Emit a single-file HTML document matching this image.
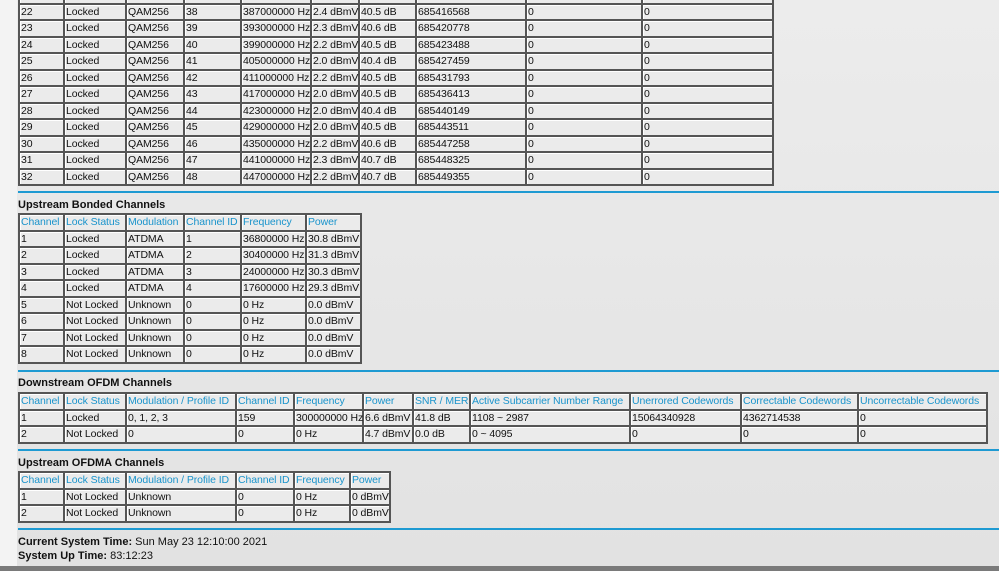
<!DOCTYPE html>
<html><head><meta charset="utf-8"><style>
body{margin:0;width:999px;height:571px;overflow:hidden;background:#f3f3f3;font-family:"Liberation Sans",Arial,sans-serif;font-size:10.5px;color:#111;position:relative}
#main{position:absolute;left:17px;top:0;width:982px;height:566px;background:linear-gradient(#ececec,#e2e2e2)}
#bar{position:absolute;left:0;top:566px;width:999px;height:5px;background:#7a7a7a}
table{position:absolute;border-collapse:collapse;table-layout:fixed;background:#ebebeb}
td,th{border:2px solid #555;padding:1px 0 0 1px;height:13.5px;line-height:13px;text-align:left;font-weight:normal;white-space:nowrap;overflow:visible;box-shadow:inset 1px 1px 0 #fff;letter-spacing:-0.1px}
th{color:#1a94cc}
.hr{position:absolute;left:18px;width:981px;height:2px;background:#1e9ad2}
.h{position:absolute;left:18px;font-weight:bold;font-size:11px}
.t{position:absolute;left:18px;font-size:11px}
</style></head><body>
<div id="main"></div>
<table style="left:18px;top:-14px;width:756px">
<colgroup><col style="width:45px"><col style="width:62px"><col style="width:58px"><col style="width:57px"><col style="width:70px"><col style="width:48px"><col style="width:57px"><col style="width:110px"><col style="width:116px"><col style="width:131px"></colgroup>
<tr><td>21</td><td>Locked</td><td>QAM256</td><td>37</td><td>381000000 Hz</td><td>2.4 dBmV</td><td>40.5 dB</td><td>685413000</td><td>0</td><td>0</td></tr>
<tr><td>22</td><td>Locked</td><td>QAM256</td><td>38</td><td>387000000 Hz</td><td>2.4 dBmV</td><td>40.5 dB</td><td>685416568</td><td>0</td><td>0</td></tr>
<tr><td>23</td><td>Locked</td><td>QAM256</td><td>39</td><td>393000000 Hz</td><td>2.3 dBmV</td><td>40.6 dB</td><td>685420778</td><td>0</td><td>0</td></tr>
<tr><td>24</td><td>Locked</td><td>QAM256</td><td>40</td><td>399000000 Hz</td><td>2.2 dBmV</td><td>40.5 dB</td><td>685423488</td><td>0</td><td>0</td></tr>
<tr><td>25</td><td>Locked</td><td>QAM256</td><td>41</td><td>405000000 Hz</td><td>2.0 dBmV</td><td>40.4 dB</td><td>685427459</td><td>0</td><td>0</td></tr>
<tr><td>26</td><td>Locked</td><td>QAM256</td><td>42</td><td>411000000 Hz</td><td>2.2 dBmV</td><td>40.5 dB</td><td>685431793</td><td>0</td><td>0</td></tr>
<tr><td>27</td><td>Locked</td><td>QAM256</td><td>43</td><td>417000000 Hz</td><td>2.0 dBmV</td><td>40.5 dB</td><td>685436413</td><td>0</td><td>0</td></tr>
<tr><td>28</td><td>Locked</td><td>QAM256</td><td>44</td><td>423000000 Hz</td><td>2.0 dBmV</td><td>40.4 dB</td><td>685440149</td><td>0</td><td>0</td></tr>
<tr><td>29</td><td>Locked</td><td>QAM256</td><td>45</td><td>429000000 Hz</td><td>2.0 dBmV</td><td>40.5 dB</td><td>685443511</td><td>0</td><td>0</td></tr>
<tr><td>30</td><td>Locked</td><td>QAM256</td><td>46</td><td>435000000 Hz</td><td>2.2 dBmV</td><td>40.6 dB</td><td>685447258</td><td>0</td><td>0</td></tr>
<tr><td>31</td><td>Locked</td><td>QAM256</td><td>47</td><td>441000000 Hz</td><td>2.3 dBmV</td><td>40.7 dB</td><td>685448325</td><td>0</td><td>0</td></tr>
<tr><td>32</td><td>Locked</td><td>QAM256</td><td>48</td><td>447000000 Hz</td><td>2.2 dBmV</td><td>40.7 dB</td><td>685449355</td><td>0</td><td>0</td></tr>
</table>
<div class="hr" style="top:191px"></div>
<div class="h" style="top:199px">Upstream Bonded Channels</div>
<table style="left:18px;top:213px;width:342px">
<colgroup><col style="width:45px"><col style="width:62px"><col style="width:58px"><col style="width:57px"><col style="width:65px"><col style="width:55px"></colgroup>
<tr><th>Channel</th><th>Lock Status</th><th>Modulation</th><th>Channel ID</th><th>Frequency</th><th>Power</th></tr>
<tr><td>1</td><td>Locked</td><td>ATDMA</td><td>1</td><td>36800000 Hz</td><td>30.8 dBmV</td></tr>
<tr><td>2</td><td>Locked</td><td>ATDMA</td><td>2</td><td>30400000 Hz</td><td>31.3 dBmV</td></tr>
<tr><td>3</td><td>Locked</td><td>ATDMA</td><td>3</td><td>24000000 Hz</td><td>30.3 dBmV</td></tr>
<tr><td>4</td><td>Locked</td><td>ATDMA</td><td>4</td><td>17600000 Hz</td><td>29.3 dBmV</td></tr>
<tr><td>5</td><td>Not Locked</td><td>Unknown</td><td>0</td><td>0 Hz</td><td>0.0 dBmV</td></tr>
<tr><td>6</td><td>Not Locked</td><td>Unknown</td><td>0</td><td>0 Hz</td><td>0.0 dBmV</td></tr>
<tr><td>7</td><td>Not Locked</td><td>Unknown</td><td>0</td><td>0 Hz</td><td>0.0 dBmV</td></tr>
<tr><td>8</td><td>Not Locked</td><td>Unknown</td><td>0</td><td>0 Hz</td><td>0.0 dBmV</td></tr>
</table>
<div class="hr" style="top:370px"></div>
<div class="h" style="top:377px">Downstream OFDM Channels</div>
<table style="left:18px;top:392px;width:968px">
<colgroup><col style="width:45px"><col style="width:62px"><col style="width:110px"><col style="width:58px"><col style="width:69px"><col style="width:50px"><col style="width:57px"><col style="width:160px"><col style="width:111px"><col style="width:117px"><col style="width:129px"></colgroup>
<tr><th>Channel</th><th>Lock Status</th><th>Modulation / Profile ID</th><th>Channel ID</th><th>Frequency</th><th>Power</th><th>SNR / MER</th><th>Active Subcarrier Number Range</th><th>Unerrored Codewords</th><th>Correctable Codewords</th><th>Uncorrectable Codewords</th></tr>
<tr><td>1</td><td>Locked</td><td>0, 1, 2, 3</td><td>159</td><td>300000000 Hz</td><td>6.6 dBmV</td><td>41.8 dB</td><td>1108 ~ 2987</td><td>15064340928</td><td>4362714538</td><td>0</td></tr>
<tr><td>2</td><td>Not Locked</td><td>0</td><td>0</td><td>0 Hz</td><td>4.7 dBmV</td><td>0.0 dB</td><td>0 ~ 4095</td><td>0</td><td>0</td><td>0</td></tr>
</table>
<div class="hr" style="top:449px"></div>
<div class="h" style="top:457px">Upstream OFDMA Channels</div>
<table style="left:18px;top:471px;width:371px">
<colgroup><col style="width:45px"><col style="width:62px"><col style="width:110px"><col style="width:58px"><col style="width:56px"><col style="width:40px"></colgroup>
<tr><th>Channel</th><th>Lock Status</th><th>Modulation / Profile ID</th><th>Channel ID</th><th>Frequency</th><th>Power</th></tr>
<tr><td>1</td><td>Not Locked</td><td>Unknown</td><td>0</td><td>0 Hz</td><td>0 dBmV</td></tr>
<tr><td>2</td><td>Not Locked</td><td>Unknown</td><td>0</td><td>0 Hz</td><td>0 dBmV</td></tr>
</table>
<div class="hr" style="top:528px"></div>
<div class="t" style="top:536px"><b>Current System Time:</b> Sun May 23 12:10:00 2021</div>
<div class="t" style="top:550px"><b>System Up Time:</b> 83:12:23</div>
<div id="bar"></div>
</body></html>
